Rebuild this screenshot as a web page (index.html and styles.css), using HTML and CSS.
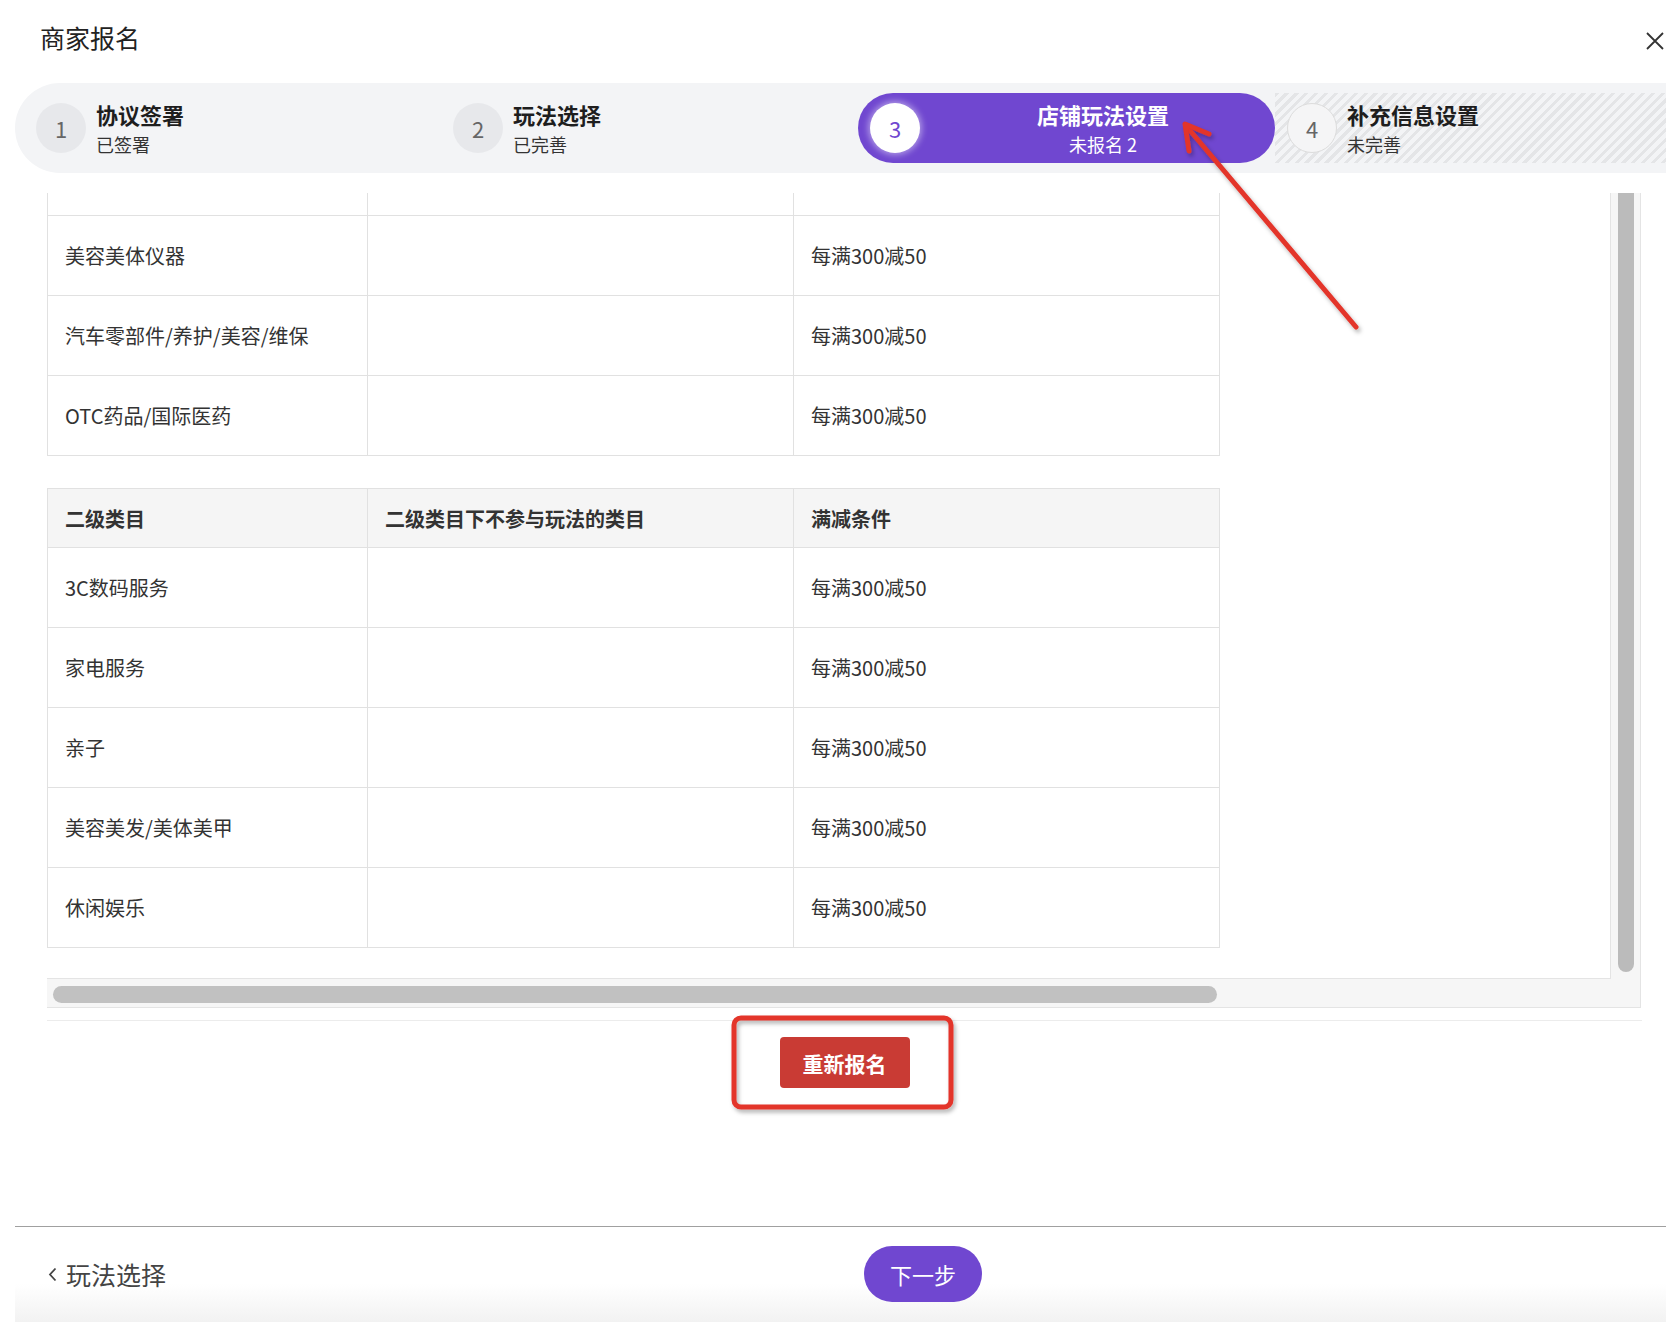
FILE: index.html
```html
<!DOCTYPE html>
<html lang="zh-CN">
<head>
  <meta charset="UTF-8" />
  <meta name="viewport" content="width=device-width, initial-scale=1" />
  <title>商家报名</title>
  <link rel="stylesheet" href="styles.css">
</head>
<body>

  <div class="modal">
    <header class="modal-head">
      <h1 class="modal-title">商家报名</h1>
      <button class="close" aria-label="关闭">
        <svg width="18" height="18" viewBox="0 0 18 18"><path d="M1 1L17 17M17 1L1 17" stroke="#333" stroke-width="1.8" fill="none"/></svg>
      </button>
    </header>

    <ol class="steps">
      <li class="step">
        <span class="step-no">1</span>
        <div class="step-text"><span class="step-title">协议签署</span><span class="step-sub">已签署</span></div>
      </li>
      <li class="step">
        <span class="step-no">2</span>
        <div class="step-text"><span class="step-title">玩法选择</span><span class="step-sub">已完善</span></div>
      </li>
      <li class="step active">
        <span class="step-no">3</span>
        <div class="step-text"><span class="step-title">店铺玩法设置</span><span class="step-sub">未报名 2</span></div>
      </li>
      <li class="step todo">
        <span class="step-no">4</span>
        <div class="step-text"><span class="step-title">补充信息设置</span><span class="step-sub">未完善</span></div>
      </li>
    </ol>

    <div class="scroll-frame">
      <div class="scroll-view">
        <table class="cat-table first">
          <colgroup><col class="c1"><col class="c2"><col class="c3"></colgroup>
          <tr><td></td><td></td><td></td></tr>
          <tr><td>美容美体仪器</td><td></td><td>每满300减50</td></tr>
          <tr><td>汽车零部件/养护/美容/维保</td><td></td><td>每满300减50</td></tr>
          <tr><td>OTC药品/国际医药</td><td></td><td>每满300减50</td></tr>
        </table>

        <table class="cat-table">
          <colgroup><col class="c1"><col class="c2"><col class="c3"></colgroup>
          <tr><th>二级类目</th><th>二级类目下不参与玩法的类目</th><th>满减条件</th></tr>
          <tr><td>3C数码服务</td><td></td><td>每满300减50</td></tr>
          <tr><td>家电服务</td><td></td><td>每满300减50</td></tr>
          <tr><td>亲子</td><td></td><td>每满300减50</td></tr>
          <tr><td>美容美发/美体美甲</td><td></td><td>每满300减50</td></tr>
          <tr><td>休闲娱乐</td><td></td><td>每满300减50</td></tr>
        </table>
      </div>
      <div class="vbar"><i></i></div>
      <div class="hbar"><i></i></div>
    </div>

    <div class="actions">
      <button class="btn-redo">重新报名</button>
    </div>

    <footer class="modal-foot">
      <a class="back" href="#">
        <svg width="9" height="15" viewBox="0 0 9 15"><path d="M7.5 1.5L2 7.5L7.5 13.5" stroke="#444" stroke-width="1.8" fill="none"/></svg>
        玩法选择
      </a>
      <button class="btn-next">下一步</button>
    </footer>
  </div>

  <!-- annotations drawn over the screenshot -->
  <svg class="annot" width="1666" height="1322" viewBox="0 0 1666 1322">
    <defs>
      <filter id="shadow" x="-20%" y="-20%" width="140%" height="140%">
        <feDropShadow dx="2" dy="3" stdDeviation="2" flood-color="#000" flood-opacity="0.3"/>
      </filter>
    </defs>
    <g filter="url(#shadow)" stroke="#e3342a" stroke-width="5" stroke-linecap="round" stroke-linejoin="round" fill="none">
      <path d="M1356 327L1187 127"/>
      <path d="M1209 134L1185 124L1189 151"/>
      <rect x="734" y="1018" width="217" height="89" rx="7"/>
    </g>
  </svg>

</body>
</html>
```

FILE: styles.css
```css
body {
  margin: 0;
  position: relative;
  font-family: "Noto Sans CJK SC", "Noto Sans", sans-serif;
  color: #333;
  background: #fff;
  overflow: hidden;
}
.modal {
  width: 1666px;
  height: 1322px;
  overflow: hidden;
}
.modal-head {
  display: flex;
  justify-content: space-between;
  align-items: flex-start;
  height: 83px;
  box-sizing: border-box;
  padding: 20px 2px 0 40px;
}
.modal-title {
  margin: 0;
  font-size: 25px;
  line-height: 34px;
  font-weight: 400;
  color: #222;
}
.close {
  margin-top: 12px;
  padding: 0;
  width: 18px;
  height: 18px;
  border: none;
  background: none;
  cursor: pointer;
}

/* step bar */
.steps {
  list-style: none;
  display: flex;
  height: 90px;
  box-sizing: border-box;
  margin: 0 0 20px 15px;
  padding: 10px 0 10px 9px;
  background: #f3f4f6;
  border-radius: 45px 0 0 45px;
  overflow: hidden;
}
.step {
  flex: 0 0 417px;
  display: flex;
  align-items: center;
  height: 70px;
  box-sizing: border-box;
  padding-left: 12px;
}
.step-no {
  flex-shrink: 0;
  display: flex;
  align-items: center;
  justify-content: center;
  width: 50px;
  height: 50px;
  box-sizing: border-box;
  border-radius: 50%;
  background: #e7e8eb;
  font-size: 22px;
  color: #666;
}
.step-text {
  display: flex;
  flex-direction: column;
  gap: 4px;
  margin-left: 10px;
}
.step-title {
  font-size: 22px;
  line-height: 28px;
  font-weight: 700;
  color: #1e1e1e;
}
.step-sub {
  font-size: 18px;
  line-height: 24px;
  color: #333;
}
.step.active {
  background: #7047d0;
  border-radius: 35px;
}
.step.active .step-no {
  background: #fff;
  color: #7047d0;
  box-shadow: 0 0 6px 2px rgba(255, 255, 255, 0.45);
}
.step.active .step-text {
  flex: 1;
  align-items: center;
  margin-left: 11px;
}
.step.active .step-title,
.step.active .step-sub {
  color: #fff;
}
.step.todo {
  background: repeating-linear-gradient(135deg, #e4e5e7 0 3px, #f3f4f6 3px 7px);
}
.step.todo .step-no {
  background: #f5f5f6;
  border: 1px solid #dcdcdc;
}

/* table area with its scrollbars */
.scroll-frame {
  display: grid;
  grid-template-columns: 1fr 29px;
  grid-template-rows: 1fr 28px;
  width: 1594px;
  height: 815px;
  box-sizing: border-box;
  margin-left: 47px;
  background: #f6f6f6;
  border-right: 1px solid #e4e4e4;
  border-bottom: 1px solid #e4e4e4;
}
.scroll-view {
  overflow: hidden;
  background: #fff;
  border-right: 1px solid #e4e4e4;
  border-bottom: 1px solid #e4e4e4;
}
.vbar {
  padding-left: 7px;
}
.vbar i {
  display: block;
  width: 16px;
  height: calc(100% - 7px);
  background: #bbb;
  border-radius: 0 0 8px 8px;
}
.hbar {
  grid-column: 1 / 3;
  padding: 7px 0 0 6px;
}
.hbar i {
  display: block;
  width: 1164px;
  height: 17px;
  background: #c1c1c1;
  border-radius: 9px;
}
.cat-table {
  width: 1172px;
  table-layout: fixed;
  border-collapse: collapse;
  font-size: 20px;
  color: #333;
}
.cat-table.first {
  margin-top: -58px;
}
.cat-table + .cat-table {
  margin-top: 32px;
}
.cat-table .c1 {
  width: 320px;
}
.cat-table .c2,
.cat-table .c3 {
  width: 426px;
}
.cat-table td,
.cat-table th {
  height: 80px;
  box-sizing: border-box;
  padding: 0 17px;
  border: 1px solid #e1e1e1;
  text-align: left;
}
.cat-table th {
  height: 59px;
  background: #f5f5f5;
  font-weight: 700;
}

.actions {
  display: flex;
  justify-content: center;
  align-items: flex-start;
  width: 1595px;
  height: 206px;
  box-sizing: border-box;
  margin: 12px 0 0 47px;
  padding-top: 16px;
  border-top: 1px solid #ececec;
}
.btn-redo {
  width: 130px;
  height: 51px;
  border: none;
  border-radius: 4px;
  background: #c93b34;
  color: #fff;
  font-family: inherit;
  font-size: 21px;
  font-weight: 700;
}

.modal-foot {
  display: grid;
  grid-template-columns: 816px auto;
  align-items: center;
  align-content: start;
  height: 96px;
  box-sizing: border-box;
  margin-left: 15px;
  padding: 19px 0 0 33px;
  border-top: 1px solid #a0a0a0;
  background: linear-gradient(#fff 60%, #f2f2f2);
}
.back {
  display: flex;
  align-items: center;
  gap: 9px;
  font-size: 25px;
  color: #444;
  text-decoration: none;
}
.btn-next {
  width: 118px;
  height: 56px;
  border: none;
  border-radius: 28px;
  background: #7047d0;
  color: #fff;
  font-family: inherit;
  font-size: 22px;
}

.annot {
  position: absolute;
  top: 0;
  left: 0;
  pointer-events: none;
}
```
